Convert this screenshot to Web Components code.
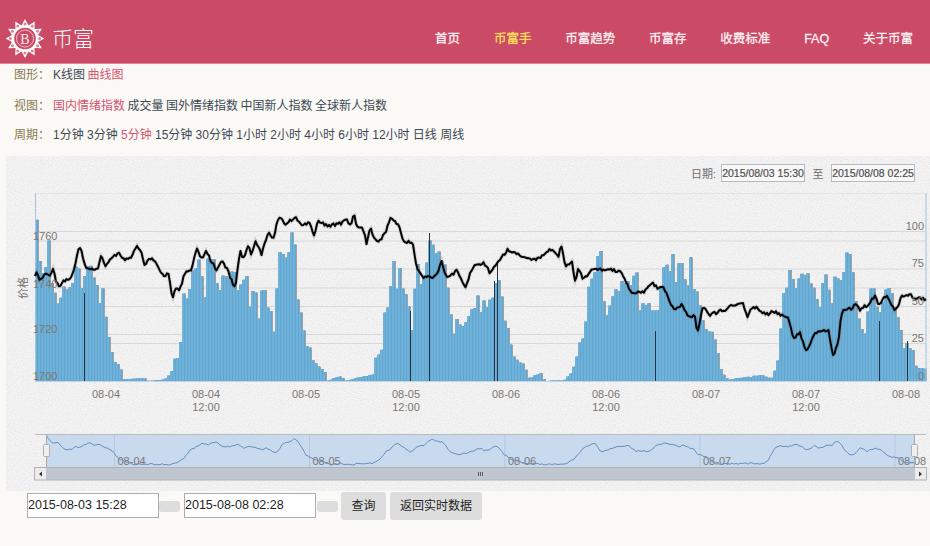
<!DOCTYPE html>
<html lang="zh">
<head>
<meta charset="utf-8">
<title>币富手</title>
<style>
  html, body { margin: 0; background: rgb(250, 249, 245); }
  body { width: 930px; height: 546px; overflow: hidden; font-family: "Liberation Sans", "Noto Sans CJK SC", sans-serif; }
</style>
</head>
<body>
<site-header>
  <nav-link href="#">首页</nav-link>
  <nav-link href="#" active>币富手</nav-link>
  <nav-link href="#">币富趋势</nav-link>
  <nav-link href="#">币富存</nav-link>
  <nav-link href="#">收费标准</nav-link>
  <nav-link href="#">FAQ</nav-link>
  <nav-link href="#">关于币富</nav-link>
</site-header>
<filter-row label="图形：" items="K线图,曲线图" active="曲线图" top="3" gap="2.5"></filter-row>
<filter-row label="视图：" items="国内情绪指数,成交量,国外情绪指数,中国新人指数,全球新人指数" active="国内情绪指数" top="14" gap="2.5"></filter-row>
<filter-row label="周期：" items="1分钟,3分钟,5分钟,15分钟,30分钟,1小时,2小时,4小时,6小时,12小时,日线,周线" active="5分钟" top="12" gap="3.3"></filter-row>
<price-chart></price-chart>
<range-form></range-form>

<script>
const headerTemplate = document.createElement('template');
headerTemplate.innerHTML = `
  <style>
    :host {
      display: flex;
      align-items: center;
      justify-content: space-between;
      height: 64px;
      box-sizing: border-box;
      padding: 0 17px 0 6px;
      background: rgb(203, 74, 101);
      border-bottom: 1px solid rgb(226, 130, 150);
    }
    .brand { display: flex; align-items: center; gap: 8px; color: white; margin-top: 13px; }
    .brand span { font-size: 21px; font-weight: 300; line-height: 1; }
    svg { display: block; }
    nav { display: flex; gap: 33.8px; margin-top: 15px; }
  </style>
  <div class="brand">
    <svg id="logo" width="38" height="39" viewBox="-19 -19.5 38 39"></svg>
    <span>币富</span>
  </div>
  <nav><slot></slot></nav>
`;

class SiteHeader extends HTMLElement {
  constructor() {
    super();
    this.attachShadow({ mode: 'open' });
    this.shadowRoot.appendChild(headerTemplate.content.cloneNode(true));
  }

  connectedCallback() {
    // sunburst wreath round the B
    let star = '';
    let petals = '';
    const tips = 12;
    for (let i = 0; i < tips * 2; i++) {
      const r = i % 2 ? 13.5 : 19.5;
      const a = (i / (tips * 2)) * Math.PI * 2 - Math.PI / 2;
      star += `${(Math.cos(a) * r).toFixed(1)},${(Math.sin(a) * r).toFixed(1)} `;
      if (i % 2 === 0) {
        petals += `<circle cx="${(Math.cos(a) * 14.6).toFixed(1)}" cy="${(Math.sin(a) * 14.6).toFixed(1)}" r="1.5" fill="rgb(222,130,150)"/>`;
      }
    }
    this.shadowRoot.getElementById('logo').innerHTML = `
      <polygon points="${star}" fill="white"/>
      ${petals}
      <circle r="10.8" fill="rgb(203,74,101)"/>
      <circle r="8.5" fill="none" stroke="rgb(245,215,222)" stroke-width="0.8"/>
      <text y="5" text-anchor="middle" font-size="14" font-family="Liberation Serif, serif" fill="rgb(250,235,238)">B</text>
    `;
  }
}
customElements.define('site-header', SiteHeader);

class NavLink extends HTMLElement {
  constructor() {
    super();
    this.attachShadow({ mode: 'open' }).innerHTML = `
      <style>
        :host { display: block; font-size: 12.5px; line-height: 16px; color: rgb(253, 240, 243); -webkit-text-stroke: 0.3px currentColor; }
        :host([active]) { color: rgb(250, 222, 90); }
      </style>
      <slot></slot>
    `;
  }
}
customElements.define('nav-link', NavLink);

class FilterRow extends HTMLElement {
  constructor() {
    super();
    this.attachShadow({ mode: 'open' });
  }

  connectedCallback() {
    const items = (this.getAttribute('items') || '').split(',');
    const active = this.getAttribute('active');
    this.shadowRoot.innerHTML = `
      <style>
        :host { display: flex; height: 17px; padding-left: 14px; font-size: 12px; line-height: 17px; color: rgb(62, 72, 84); }
        .label { width: 39px; color: rgb(140, 122, 82); }
        .items { display: flex; gap: ${this.getAttribute('gap') || 3}px; }
        .on { color: rgb(214, 84, 112); }
      </style>
      <span class="label">${this.getAttribute('label')}</span>
      <div class="items">
        ${items.map((t) => `<span class="${t === active ? 'on' : ''}">${t}</span>`).join('')}
      </div>
    `;
    this.style.marginTop = (this.getAttribute('top') || 0) + 'px';
  }
}
customElements.define('filter-row', FilterRow);

// reference shapes, read off the picture in page pixels
const zoom = (ox, oy, pts) => {
  const out = [];
  for (let i = 0; i < pts.length; i += 2) out.push([ox + pts[i] / 3, oy + pts[i + 1] / 3]);
  return out;
};

const LINE = [
  ...zoom(0, 180, [105,285,112,272,120,300,135,275,150,285,158,262,170,305,178,320,190,298,210,298,222,265,235,205,242,200,255,255,265,265,285,262,295,262,305,220,315,260,335,232,355,215,375,235,395,225,410,195,425,215,432,255,450,230,465,240,475,262,495,285,505,275,517,355,525,320,540,325,555,275,575,265,590,205,605,230,620,210,630,235,650,265,665,240,680,260,705,325,720,210,730,235,745,190,755,225,765,180,785,220,805,150,820,175,835,108,860,130,885,105,905,135]),
  ...zoom(310, 180, [0,125,12,165,25,118,50,135,100,125,110,115,120,135,133,97,140,140,160,145,170,188,180,140,200,185,225,160,240,112,265,130,282,185,308,180,320,260,340,290,380,285,393,240,410,290,440,270,465,318,490,255,520,245,540,275,570,235,595,205,640,230,685,235,720,205,745,225,755,193,765,255,785,240,795,300,805,265,820,295,850,265,890,265]),
  ...zoom(620, 180, [0,270,35,335,75,330,95,303,115,325,130,315,160,385,185,370,205,410,225,405,232,460,248,380,270,400,320,385,330,372,370,370,382,405,400,375,440,400,460,392,490,405,505,410,520,470,540,455,560,515,585,455,625,445,640,530,655,480,665,395,685,378,695,385,705,365,720,385,745,370,765,345,775,370,800,345,825,392,845,348,870,338,885,355,920,352])
];

const BARS = [
  ...zoom(0, 180, [105,40,110,95,115,200,122,240,130,220,137,215,143,175,150,280,160,330,170,340,180,350,190,300,205,290,215,300,225,240,240,200,250,280,265,220,280,290,295,340,305,300,315,420,325,480,340,535,355,550,365,595,430,590,440,600,490,595,510,575,520,530,535,490,545,340,560,320,575,260,590,200,605,280,620,200,635,200,650,320,665,280,680,285,695,210,710,330,730,260,750,300,770,350,785,290,800,360,820,400,835,200,850,230,870,125,885,200,900,400,915,480]),
  ...zoom(310, 180, [0,500,15,545,40,570,50,600,70,590,90,585,105,600,135,590,185,580,190,530,210,510,215,375,235,350,250,197,265,240,280,320,300,400,320,240,335,300,358,150,380,190,400,205,415,370,430,410,450,420,470,400,490,360,510,310,530,370,555,280,565,250,580,400,595,460,610,530,640,550,650,590,690,575,700,600,760,597,780,575,795,530,815,420,830,300,850,250,870,185,880,400,895,375,912,310]),
  ...zoom(620, 180, [0,300,15,265,30,290,45,255,55,380,70,350,90,370,110,360,125,235,140,240,155,205,165,290,178,215,195,320,210,212,222,350,232,260,245,350,255,450,275,450,285,480,300,570,320,595,420,580,440,590,455,590,470,530,490,305,505,260,525,300,540,270,560,250,580,310,595,370,610,230,630,350,645,240,660,300,680,160,695,260,710,380,730,460,755,270,770,390,790,315,810,325,830,410,845,460,860,480,875,505,890,560,910,560,925,590])
];

const DARK_BARS = [[84, 292], [410, 310], [429, 232], [494, 280], [497, 262], [655, 330], [879, 320], [907, 340]];

const GRID_Y = [192, 230.5, 240, 268, 287, 305.5, 333.5, 342.5];
const TICKS = [[106, '08-04'], [206, '08-04', '12:00'], [306, '08-05'], [406, '08-05', '12:00'], [506, '08-06'], [606, '08-06', '12:00'], [706, '08-07'], [806, '08-07', '12:00'], [906, '08-08']];
const NAV_TICKS = [[114.5, '08-04'], [309.5, '08-05'], [505, '08-06'], [700, '08-07'], [895, '08-08']];

const NOISE = "url(\"data:image/svg+xml,%3Csvg xmlns='http://www.w3.org/2000/svg' width='240' height='240'%3E%3Cfilter id='n'%3E%3CfeTurbulence type='fractalNoise' baseFrequency='0.85' numOctaves='2' seed='7'/%3E%3CfeColorMatrix values='0 0 0 0 0.55 0 0 0 0 0.55 0 0 0 0 0.55 0.6 0 0 0 -0.2'/%3E%3C/filter%3E%3Crect width='240' height='240' filter='url(%23n)'/%3E%3C/svg%3E\")";

const lerp = (pts, x) => {
  if (x <= pts[0][0]) return pts[0][1];
  for (let i = 1; i < pts.length; i++) {
    if (x <= pts[i][0]) {
      const [x0, y0] = pts[i - 1];
      const [x1, y1] = pts[i];
      return y0 + ((y1 - y0) * (x - x0)) / (x1 - x0 || 1);
    }
  }
  return pts[pts.length - 1][1];
};

const seeded = (seed) => () => {
  seed = (seed * 1664525 + 1013904223) % 4294967296;
  return seed / 4294967296;
};

const chartTemplate = document.createElement('template');
chartTemplate.innerHTML = `
  <style>
    :host {
      display: block;
      margin: 12px 0 0 6px;
      height: 335px;
      background-color: rgb(245, 245, 245);
      background-image: ${NOISE};
    }
    .dates {
      display: flex;
      justify-content: flex-end;
      align-items: center;
      height: 37px;
      padding: 0 15px 3px 0;
      box-sizing: border-box;
      font-size: 11px;
      color: rgb(110, 110, 110);
    }
    .dates b {
      font-weight: 400;
      margin-right: 5px;
    }
    .dates span {
      box-sizing: border-box;
      width: 84px;
      height: 18px;
      line-height: 16px;
      text-align: center;
      font-size: 10.5px;
      color: rgb(80, 80, 80);
      -webkit-text-stroke: 0.2px currentColor;
      border: 1px solid rgb(185, 185, 185);
      background: rgb(248, 248, 248);
    }
    .dates i { font-style: normal; width: 26px; text-align: center; }
    svg { display: block; }
    text { font-family: "Liberation Sans", "Noto Sans CJK SC", sans-serif; }
  </style>
  <div class="dates">
    <b>日期:</b><span>2015/08/03 15:30</span><i>至</i><span>2015/08/08 02:25</span>
  </div>
  <svg id="plot" width="924" height="298" viewBox="6 192 924 298"></svg>
`;

class PriceChart extends HTMLElement {
  constructor() {
    super();
    this.attachShadow({ mode: 'open' });
    this.shadowRoot.appendChild(chartTemplate.content.cloneNode(true));
  }

  connectedCallback() {
    this.shadowRoot.getElementById('plot').innerHTML = this._render();
  }

  _barsPaths(rand) {
    let full = '';
    let edge = '';
    for (let x = 35; x < 926; x += 3) {
      const h = Math.max(0, 380 - lerp(BARS, x + 0.5));
      // spiky: most bars drop a bit below the envelope, some a lot
      const drop = rand() < 0.12 ? 0.72 : 0.88 + rand() * 0.12;
      const y = (380 - h * drop).toFixed(1);
      full += `M${x} 380V${y}H${x + 3}V380Z`;
      edge += `M${x + 2} 380V${y}H${x + 3}V380Z`;
    }
    return { full, edge };
  }

  _linePath(rand) {
    const pts = [];
    for (let x = 35; x <= 926.5; x += 1.5) {
      pts.push(`${x.toFixed(1)},${(lerp(LINE, x) + (rand() - 0.5) * 3.2).toFixed(1)}`);
    }
    return pts.join(' ');
  }

  _navPath(rand) {
    const pts = [];
    for (let x = 46; x <= 914; x += 2) {
      const src = 35 + ((x - 46) * 891) / 868;
      let sum = 0;
      for (let k = -3; k <= 3; k++) sum += 380 - lerp(BARS, src + k);
      const h = sum / 7;
      pts.push(`${x},${(463.5 - h * 0.17 + (rand() - 0.5) * 1.6).toFixed(1)}`);
    }
    return pts.join(' ');
  }

  _render() {
    const rand = seeded(42);
    const grid = GRID_Y.map((y) => `<line x1="35" x2="926" y1="${y}" y2="${y}" stroke="rgb(216,216,216)" stroke-width="1.2"/>`).join('');
    const dark = DARK_BARS.map(([x, y]) => `<line x1="${x + 0.5}" x2="${x + 0.5}" y1="${y}" y2="380" stroke="rgb(35,52,68)" stroke-width="1"/>`).join('');
    const left = [[235, 1760], [283, 1740], [328, 1720], [375, 1700]].map(([y, t]) => `<text x="33" y="${y + 4}" font-size="11" fill="rgb(125,118,112)">${t}</text>`).join('');
    const right = [[225, 100], [262, 75], [300, 50], [337, 25], [375, 0]].map(([y, t]) => `<text x="924" y="${y + 4}" text-anchor="end" font-size="11" fill="rgb(125,118,112)">${t}</text>`).join('');
    const ticks = TICKS.map(([x, a, b]) => `
      <text x="${x}" y="397" text-anchor="middle" font-size="11" fill="rgb(125,118,112)">${a}</text>
      ${b ? `<text x="${x}" y="410" text-anchor="middle" font-size="11" fill="rgb(125,118,112)">${b}</text>` : ''}
    `).join('');
    const navTicks = NAV_TICKS.map(([x, t]) => `
      <line x1="${x}" x2="${x}" y1="434" y2="467" stroke="rgb(178,199,224)"/>
      <text x="${x + 3}" y="464" font-size="11" fill="rgb(125,118,112)">${t}</text>
    `).join('');
    const bars = this._barsPaths(rand);
    const line = this._linePath(rand);
    return `
      ${grid}
      <path d="${bars.full}" fill="rgb(120,120,120)" opacity="0.65" transform="translate(1 0)"/>
      <path d="${bars.full}" fill="rgb(110,177,217)"/>
      <path d="${bars.edge}" fill="rgb(98,165,206)"/>
      ${dark}
      <line x1="35.5" x2="35.5" y1="192" y2="380" stroke="rgb(160,196,228)"/>
      <line x1="926" x2="926" y1="192" y2="380" stroke="rgb(160,196,228)"/>
      <line x1="35" x2="926" y1="380.5" y2="380.5" stroke="rgb(196,212,230)"/>
      <polyline points="${line}" fill="none" stroke="rgb(60,60,60)" stroke-opacity="0.18" stroke-width="3.6"/>
      <polyline points="${line}" fill="none" stroke="rgb(5,5,5)" stroke-width="2" stroke-linejoin="round"/>
      ${left}${right}${ticks}
      <text transform="translate(27 287) rotate(-90)" text-anchor="middle" font-size="11" fill="rgb(125,118,112)">价格</text>

      <rect x="46.5" y="434" width="868" height="33" fill="rgb(200,218,238)"/>
      ${navTicks}
      <polyline points="${this._navPath(rand)}" fill="none" stroke="rgb(105,143,192)" stroke-width="1"/>
      <line x1="35" x2="926" y1="433.5" y2="433.5" stroke="rgb(185,185,185)"/>
      <line x1="46.5" x2="46.5" y1="434" y2="467" stroke="rgb(170,170,170)"/>
      <line x1="914.5" x2="914.5" y1="434" y2="467" stroke="rgb(170,170,170)"/>
      <rect x="43.5" y="443.5" width="6" height="12" rx="1" fill="rgb(240,240,240)" stroke="rgb(175,175,175)"/>
      <rect x="911.5" y="443.5" width="6" height="12" rx="1" fill="rgb(240,240,240)" stroke="rgb(175,175,175)"/>
      <rect x="35" y="467" width="891" height="12" fill="rgb(191,198,208)"/>
      <rect x="35" y="467" width="11" height="12" fill="rgb(236,236,236)"/>
      <rect x="915" y="467" width="11" height="12" fill="rgb(236,236,236)"/>
      <rect x="34.5" y="466.5" width="892" height="12.5" fill="none" stroke="rgb(178,178,178)"/>
      <path d="M39 473l3-2.5v5zM922 473l-3-2.5v5z" fill="rgb(50,50,50)"/>
      <path d="M478.5 471v4M480.5 471v4M482.5 471v4" stroke="rgb(90,90,90)"/>
    `;
  }
}
customElements.define('price-chart', PriceChart);

class RangeForm extends HTMLElement {
  constructor() {
    super();
    this.attachShadow({ mode: 'open' }).innerHTML = `
      <style>
        :host { display: flex; align-items: center; height: 28px; margin-top: 1px; padding-left: 27px; font-size: 12px; color: rgb(30, 30, 30); }
        .field { box-sizing: border-box; width: 132px; height: 25px; margin-top: -1px; line-height: 23px; font-size: 12.5px; background: white; border: 1px solid rgb(172, 172, 172); }
        .pill { width: 21px; height: 11px; background: rgb(221, 221, 221); border-radius: 3px; }
        .gap { margin-right: 4px; }
        .btn { box-sizing: border-box; height: 28px; line-height: 28px; text-align: center; background: rgb(221, 221, 221); border-radius: 3px; }
      </style>
      <div class="field">2015-08-03 15:28</div>
      <div class="pill gap"></div>
      <div class="field">2015-08-08 02:28</div>
      <div class="pill" style="margin:0 3px 0 1px"></div>
      <div class="btn" style="width:45px;margin-right:4px">查询</div>
      <div class="btn" style="width:92px">返回实时数据</div>
    `;
  }
}
customElements.define('range-form', RangeForm);
</script>
</body>
</html>
